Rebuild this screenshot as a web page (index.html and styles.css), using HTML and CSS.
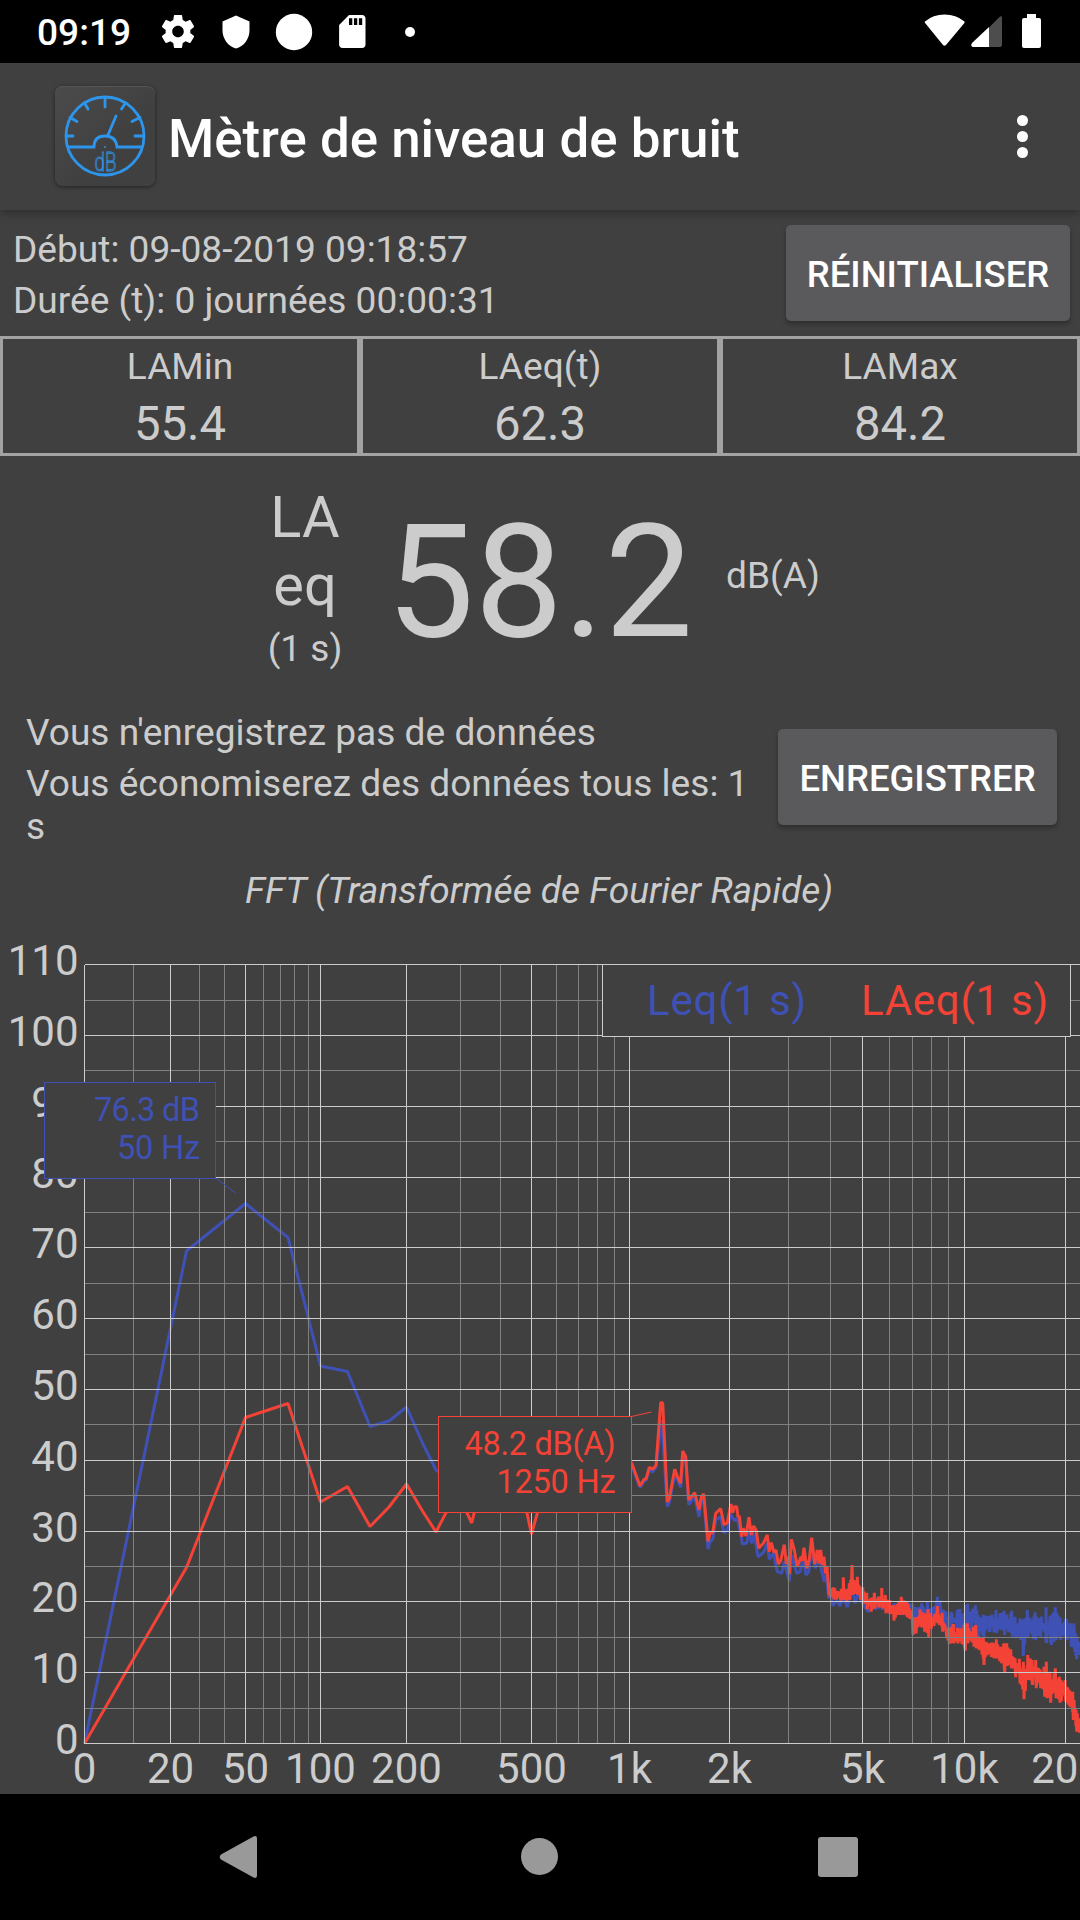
FILE: index.html
```html
<!DOCTYPE html>
<html lang="fr">
<head>
  <meta charset="UTF-8">
  <title>Mètre de niveau de bruit</title>
  <link rel="stylesheet" href="styles.css">
</head>
<body>
  <div class="statusbar">
    <span class="clock">09:19</span>
    <svg class="notifs" width="260" height="63" viewBox="150 0 260 63" fill="#fff">
      <path transform="translate(158.200 11.700) scale(1.65)" d="M19.43 12.98c.04-.32.07-.64.07-.98s-.03-.66-.07-.98l2.11-1.65c.19-.15.24-.42.12-.64l-2-3.46c-.12-.22-.39-.3-.61-.22l-2.49 1c-.52-.4-1.080-.73-1.690-.98l-.38-2.65C14.460 2.180 14.250 2 14 2h-4c-.25 0-.46.18-.49.42l-.38 2.65c-.61.25-1.170.59-1.690.98l-2.490-1c-.23-.09-.49 0-.61.22l-2 3.460c-.13.22-.07.49.12.64l2.110 1.650c-.04.32-.07.65-.07.98s.03.66.07.98l-2.110 1.650c-.19.15-.24.42-.12.64l2 3.460c.12.22.39.3.61.22l2.490-1c.52.4 1.080.73 1.690.98l.38 2.650c.03.24.24.42.49.42h4c.25 0 .46-.18.49-.42l.38-2.650c.61-.25 1.170-.59 1.690-.98l2.490 1c.23.09.49 0 .61-.22l2-3.460c.12-.22.07-.49-.12-.64l-2.110-1.650zM12 15.500c-1.930 0-3.500-1.570-3.500-3.500s1.570-3.500 3.500-3.500 3.500 1.570 3.500 3.500-1.570 3.500-3.500 3.500z"/>
      <path transform="translate(218 13.900) scale(1.5)" d="M12 1L3 5v6c0 5.550 3.840 10.740 9 12 5.160-1.260 9-6.450 9-12V5l-9-4z"/>
      <circle cx="294" cy="32" r="18.200"/>
      <path transform="translate(332.500 11.700) scale(1.65)" d="M18 2h-8L4.020 8 4 20c0 1.100.9 2 2 2h12c1.100 0 2-.9 2-2V4c0-1.100-.9-2-2-2zm-6 6h-2V4h2v4zm3 0h-2V4h2v4zm3 0h-2V4h2v4z"/>
    </svg>
    <span class="more-dot"></span>
    <svg class="signals" width="120" height="63" viewBox="921 0 120 63" fill="#fff">
      <path d="M925 21.500Q933 14.500 944.500 14.500T964.500 21.500Q965 22.500 964 23.500L946 45Q944.500 46.500 943 45L925.500 23.500Q924 22.500 925 21.500z"/>
      <path fill="#4d4d4d" d="M989 27.500L1000 16.500q2-1 2 1V45q0 2-2 2h-11z"/>
      <path d="M989 27v20h-16q-3-1-1-4z"/>
      <path d="M1027 14h9v4h3q2 0 2 2v26q0 2-2 2h-15q-2 0-2-2V20q0-2 2-2h3z"/>
    </svg>
  </div>

  <header class="appbar">
    <div class="logo">
      <svg width="100" height="100" viewBox="55 86 100 100" fill="none" stroke="#2d96ec" stroke-width="2.800" stroke-linecap="round">
        <circle cx="105" cy="136" r="39"/>
        <path d="M105 98v9M84.500 103l3.500 6M125.500 103l-4 6M70 117.500l7 4M140 117.500l-8 4M67 136h6M135 136h8"/>
        <path d="M68 147h26q0-11 11-11t12 11h25M108 135l8-19"/>
        <circle cx="105" cy="147" r=".3" stroke-width="1.500"/>
        <text x="94.500" y="170.500" font-size="26" textLength="22" lengthAdjust="spacingAndGlyphs">dB</text>
      </svg>
    </div>
    <h1>Mètre de niveau de bruit</h1>
    <div class="menu"><i></i><i></i><i></i></div>
  </header>

  <section class="session">
    <div>
      <p>Début: 09-08-2019 09:18:57</p>
      <p>Durée (t): 0 journées 00:00:31</p>
    </div>
    <button class="reset">RÉINITIALISER</button>
  </section>

  <section class="stats">
    <div class="stat"><span>LAMin</span><b>55.4</b></div>
    <div class="stat"><span>LAeq(t)</span><b>62.3</b></div>
    <div class="stat"><span>LAMax</span><b>84.2</b></div>
  </section>

  <section class="live">
    <div class="kind"><span>LA</span><span>eq</span><small>(1 s)</small></div>
    <div class="level">58.2</div>
    <div class="unit">dB(A)</div>
  </section>

  <section class="record">
    <div>
      <p>Vous n'enregistrez pas de données</p>
      <p>Vous économiserez des données tous les: 1 s</p>
    </div>
    <button class="save">ENREGISTRER</button>
  </section>

  <h2>FFT (Transformée de Fourier Rapide)</h2>

  <svg class="chart" width="1080" height="864" viewBox="0 930 1080 864">
    <polyline class="leq" id="leq"/>
    <polyline class="laeq" id="laeq"/>
    <g id="grid"></g>
    <g id="labels"></g>

    <rect class="legend" x="602.500" y="964.500" width="468" height="72"/>
    <text class="blue" x="647" y="1015" textLength="159">Leq(1 s)</text>
    <text class="red" x="861" y="1015" textLength="187">LAeq(1 s)</text>

    <rect class="tip tip-blue" x="44.500" y="1082.500" width="171" height="96"/>
    <path class="tip-blue" d="M215.500 1178l20 15"/>
    <text class="blue note" x="200" y="1121" textLength="106">76.3 dB</text>
    <text class="blue note" x="200" y="1159" textLength="83">50 Hz</text>

    <rect class="tip tip-red" x="438.500" y="1416.500" width="193" height="96"/>
    <path class="tip-red" d="M631.500 1416.500l20-4.500"/>
    <text class="red note" x="615.500" y="1455" textLength="151">48.2 dB(A)</text>
    <text class="red note" x="615.500" y="1493" textLength="119">1250 Hz</text>
  </svg>

  <nav class="navbar">
    <svg width="1080" height="126" viewBox="0 1794 1080 126" fill="#999">
      <path d="M221 1854.500l32.500-18q3.500-1.500 3.500 2v37q0 3.500-3.500 2l-32.500-18q-2.500-2.500 0-5z"/>
      <circle cx="539.500" cy="1856.500" r="18.500"/>
      <rect x="818" y="1837" width="40" height="40" rx="3"/>
    </svg>
  </nav>

  <script src="chart.js"></script>
</body>
</html>
```
FILE: styles.css
```css
* { box-sizing: border-box; }
body { margin: 0; width: 1080px; background: #404040; color: #ccc; font-family: Roboto, "Liberation Sans", sans-serif; font-size: 37.1px; line-height: 43px; }
p, h1, h2 { margin: 0; }
svg { display: block; flex: none; }

.statusbar { display: flex; height: 63px; padding: 0 39px 0 37px; background: #000; color: #fff; align-items: center; }
.clock { width: 113px; padding-top: 1px; font-weight: 500; }
.more-dot { width: 10px; height: 10px; margin-left: -5px; border-radius: 50%; background: #fff; }
.signals { margin-left: auto; }

.appbar { display: flex; height: 147px; padding: 0 52px 0 55px; align-items: center; box-shadow: 0 3px 9px rgba(0,0,0,0.3); color: #fff; }
.logo { width: 100px; height: 100px; margin-top: -2px; border-radius: 8px; background: linear-gradient(135deg, #4b4b4b, #404040 60%); box-shadow: 0 1px 4px rgba(0,0,0,0.5), inset 0 1px #555; }
.logo text { fill: none; stroke-width: 0.8; font-weight: 300; }
h1 { margin-left: 13px; padding-top: 4px; font-size: 52.9px; line-height: 62px; font-weight: 500; }
.menu { display: grid; gap: 5px; margin-left: auto; }
.menu i { width: 11px; height: 11px; border-radius: 50%; background: #fff; }

button { height: 96px; padding: 2px 0 0; border: 0; border-radius: 5px; background: #5a5a5c; color: #fff; font: 500 36.5px/43px Roboto, "Liberation Sans", sans-serif; box-shadow: 0 3px 5px rgba(0,0,0,0.3); }
.reset { width: 284px; margin-top: -3px; }
.save { width: 279px; margin-top: 18px; }

.session { display: flex; justify-content: space-between; height: 126px; padding: 18px 10px 0 13px; }
.session p { margin-bottom: 8px; }

.stats { display: grid; grid-template-columns: repeat(3, 1fr); height: 120px; }
.stat { display: flex; flex-direction: column; align-items: center; gap: 9px; padding-top: 6px; border: 3px solid #a3a3a3; }
.stat b { font-size: 47.25px; line-height: 55px; font-weight: 400; }

.live { display: flex; height: 234px; padding: 27px 0 0 268px; }
.kind { display: flex; flex-direction: column; width: 74px; align-items: center; font-size: 57.75px; line-height: 68px; }
.kind small { margin-top: 8px; font-size: 37px; line-height: 43px; white-space: nowrap; }
.level { width: 310px; margin: 7px 0 0 44px; font-size: 157.5px; line-height: 185px; }
.unit { margin: 71px 0 0 30px; }

.record { display: flex; justify-content: space-between; height: 179px; padding: 21px 23px 0 26px; }
.record div { width: 725px; }
.record p { margin-bottom: 8px; }

h2 { height: 61px; padding-right: 2px; font-size: 37.1px; line-height: 43px; font-weight: 400; font-style: italic; text-align: center; }

.chart { font-size: 42px; }
.chart text { fill: #ccc; }
.chart line { stroke: #ccc; shape-rendering: crispEdges; }
.chart line.minor { stroke: #808080; }
.chart text.blue { fill: #3f51b5; }
.chart text.red { fill: #f44336; }
.chart text.note { font-size: 32.5px; text-anchor: end; }
.leq, .laeq { fill: none; stroke-width: 3; stroke-linejoin: bevel; }
.leq { stroke: #3f51b5; }
.laeq { stroke: #f44336; }
.legend, .tip { fill: #404040; }
.legend { stroke: #ccc; }
.tip-blue { stroke: #3f51b5; }
.tip-red { stroke: #f44336; }

.navbar { background: #000; }
```
FILE: chart.js
```js
const NS = 'http://www.w3.org/2000/svg';
const LEFT = 84.5, RIGHT = 1080, TOP = 964.5, BOTTOM = 1743.5;

function add(parent, tag, attrs, text) {
  const el = document.createElementNS(NS, tag);
  for (const k in attrs) el.setAttribute(k, attrs[k]);
  if (text) el.textContent = text;
  document.getElementById(parent).appendChild(el);
}

// grid
const minor = [133, 199, 224, 263, 280, 294, 308, 460, 500, 556, 578, 597, 614, 788, 830, 889, 912, 931, 948];
const major = { 84: '0', 170: '20', 245: '50', 320: '100', 406: '200', 531: '500', 629: '1k', 729: '2k', 862: '5k', 964: '10k', 1065: '20k' };
const rows = [1743, 1708, 1672, 1637, 1601, 1566, 1531, 1495, 1460, 1424, 1389, 1354, 1318, 1283, 1247, 1212, 1177, 1141, 1106, 1070, 1035, 1000, 964];

rows.forEach((y, i) => {
  if (i % 2) add('grid', 'line', { class: 'minor', x1: LEFT, x2: RIGHT, y1: y + 0.5, y2: y + 0.5 });
});
minor.forEach(x => add('grid', 'line', { class: 'minor', x1: x + 0.5, x2: x + 0.5, y1: TOP, y2: BOTTOM }));
rows.forEach((y, i) => {
  if (i % 2) return;
  add('grid', 'line', { x1: LEFT, x2: RIGHT, y1: y + 0.5, y2: y + 0.5 });
  add('labels', 'text', { x: 78.5, y: y + 10.5, 'text-anchor': 'end' }, String(i * 5));
});
for (const k in major) {
  const x = Number(k) + 0.5;
  add('grid', 'line', { x1: x, x2: x, y1: TOP, y2: BOTTOM });
  add('labels', 'text', { x: x, y: 1782.5, 'text-anchor': 'middle' }, major[k]);
}

// [x, y] pairs given in thirds of a pixel from an origin
function part(ox, oy, pts) {
  const out = [];
  for (let i = 0; i < pts.length; i += 2) out.push([ox + pts[i] / 3, oy + pts[i + 1] / 3]);
  return out;
}

let seed = 7;
function rnd() {
  seed = (seed * 16807) % 2147483647;
  return seed / 2147483647;
}

// dense bins: [x, top, bottom] knots, the line jumps between both edges
function dense(ox, oy, knots) {
  const out = [];
  for (let k = 0; k < knots.length - 1; k++) {
    const [xa, ta, ba] = knots[k], [xb, tb, bb] = knots[k + 1];
    for (let x = xa; x < xb; x += 4) {
      const f = (x - xa) / (xb - xa);
      const t = ta + (tb - ta) * f, b = ba + (bb - ba) * f, h = (b - t) * 0.45;
      out.push([ox + x / 3, oy + (x === xa ? t : t + rnd() * h) / 3]);
      out.push([ox + (x + 2) / 3, oy + (x === xa ? b : b - rnd() * h) / 3]);
    }
  }
  return out;
}

const leq = [
  [84.5, 1743.5], [186.5, 1251], [245.5, 1203.5], [288, 1237.5], [320.5, 1366], [347.5, 1371.5],
  [370, 1426.5], [389, 1421], [406.5, 1407], [422.5, 1443], [436, 1470], [450, 1480], [500, 1475], [620, 1460],
  ...part(400, 1350, [695, 348, 720, 412, 732, 394, 738, 390, 748, 360, 758, 366, 768, 352, 785, 210, 802, 470,
    808, 458, 824, 372, 842, 412, 850, 315, 857, 330, 866, 464, 884, 440, 897, 500, 904, 452, 911, 450,
    924, 597, 930, 575, 938, 568, 947, 510, 962, 500, 972, 550, 982, 540, 992, 490]),
  ...part(700, 1500, [95, 50, 104, 62, 112, 55, 122, 100, 127, 132, 140, 130, 146, 95, 155, 130, 163, 100, 174, 170,
    190, 158, 202, 130, 208, 178, 220, 160, 232, 214, 245, 220, 253, 185, 262, 222, 268, 244, 276, 165, 290, 220,
    300, 215, 310, 175, 318, 225, 326, 215, 335, 150, 346, 205, 357, 175, 365, 215, 373, 245, 379, 220, 386, 295,
    392, 285, 399, 317, 410, 300, 420, 318, 430, 290, 442, 322, 456, 255, 465, 310, 475, 280, 488, 312, 505, 335, 520, 320]),
  ...dense(700, 1500, [[525, 300, 330], [545, 290, 330], [565, 300, 340], [585, 310, 345], [605, 295, 345],
    [638, 312, 370], [665, 310, 370], [682, 305, 370], [697, 320, 370], [712, 290, 350], [722, 300, 370]]),
  ...dense(820, 1580, [[370, 90, 150], [392, 95, 150], [412, 90, 155], [436, 75, 150], [443, 72, 150], [450, 96, 155],
    [466, 76, 155], [474, 105, 180], [490, 104, 172], [508, 108, 155], [528, 90, 160], [552, 92, 165],
    [575, 92, 170], [585, 110, 175], [600, 115, 180], [608, 118, 228], [616, 115, 175], [622, 90, 175], [645, 97, 180],
    [660, 115, 170], [678, 82, 190], [692, 110, 195], [706, 82, 180], [720, 112, 180], [740, 116, 180],
    [752, 130, 200], [762, 130, 215], [768, 165, 238], [780, 170, 242]])
];

const laeq = [
  [84.5, 1743.5], [186.5, 1567.5], [245.5, 1417.5], [288, 1403.5], [320.5, 1502], [347.5, 1486.5],
  [370, 1526.5], [389, 1507], [406.5, 1484], [422.5, 1511], [436, 1532], [450, 1505], [461, 1500],
  [471.7, 1523], [480, 1490], [522, 1490], [531.5, 1534], [541, 1500], [560, 1470], [620, 1452],
  ...part(400, 1350, [695, 340, 720, 408, 732, 388, 738, 387, 748, 352, 758, 358, 768, 346, 782, 158, 788, 158, 802, 456,
    808, 446, 824, 358, 833, 382, 842, 400, 848, 303, 857, 320, 866, 450, 884, 428, 897, 480, 904, 440, 911, 432,
    924, 574, 930, 550, 938, 548, 947, 490, 962, 476, 972, 524, 982, 518, 992, 466]),
  ...part(700, 1500, [93, 12, 98, 38, 103, 20, 110, 20, 114, 50, 118, 48, 125, 110, 130, 85, 138, 108, 147, 52, 154, 105, 161, 78, 169, 92,
    176, 145, 190, 130, 202, 105, 208, 155, 214, 128, 222, 158, 228, 150, 235, 192, 242, 182, 253, 134, 259, 192, 263, 170, 268, 222,
    274, 118, 283, 150, 292, 200, 303, 170, 307, 182, 312, 143, 320, 205, 328, 178, 335, 113, 344, 192, 352, 150, 357, 190, 362, 150, 367, 195,
    372, 170, 376, 220, 381, 200, 387, 285]),
  ...dense(700, 1500, [[388, 250, 290], [400, 262, 298], [420, 275, 302], [430, 232, 300], [438, 270, 306], [448, 250, 300],
    [456, 195, 285], [463, 240, 282], [472, 230, 285], [480, 260, 300], [488, 262, 305], [500, 278, 328],
    [512, 295, 335], [523, 278, 325], [535, 290, 322], [545, 264, 325], [556, 285, 340], [568, 300, 342], [580, 315, 362],
    [592, 312, 345], [604, 290, 345], [620, 305, 352], [636, 320, 362]]),
  ...dense(820, 1580, [[277, 115, 165], [286, 112, 160], [300, 88, 140], [312, 100, 155], [324, 88, 172], [332, 100, 145],
    [352, 78, 130], [366, 98, 155], [386, 142, 192], [400, 132, 190], [424, 145, 192], [434, 130, 212], [442, 130, 190],
    [460, 140, 200], [467, 135, 205], [476, 170, 210], [490, 172, 255], [496, 185, 225], [520, 188, 235], [529, 178, 235],
    [543, 200, 250], [552, 190, 278], [560, 190, 258], [572, 208, 265], [585, 235, 292], [598, 236, 310], [610, 245, 358],
    [623, 225, 300], [636, 240, 315], [647, 240, 325], [660, 268, 325], [672, 260, 350], [679, 245, 355], [690, 275, 368],
    [706, 265, 355], [718, 290, 368], [735, 300, 365], [748, 330, 382], [758, 335, 420], [768, 390, 455], [780, 410, 468]])
];

document.getElementById('leq').setAttribute('points', leq.map(p => p.map(n => n.toFixed(1)).join(',')).join(' '));
document.getElementById('laeq').setAttribute('points', laeq.map(p => p.map(n => n.toFixed(1)).join(',')).join(' '));
```
